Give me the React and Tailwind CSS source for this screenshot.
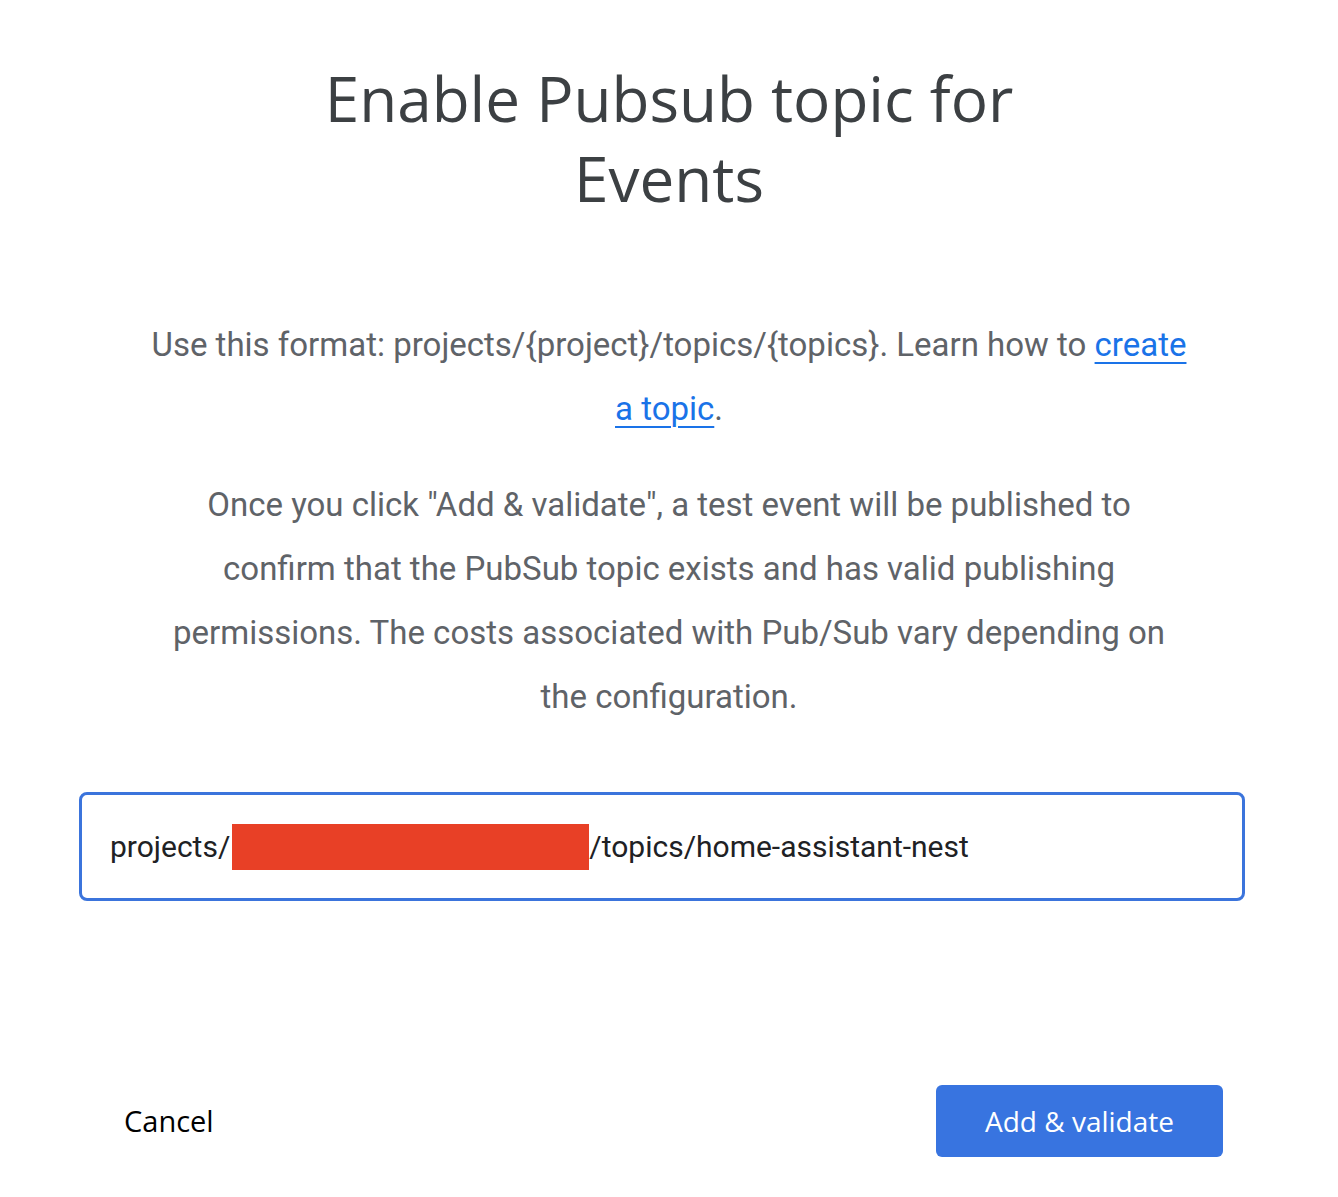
export default function App() {
  return (
    <div className="w-[1338px] h-[1197px] bg-white flex flex-col items-center">
      <h1 className="mt-[58px] text-[62px] leading-[80px] text-[#3c4043] text-center font-normal w-[760px] font-['Open_Sans',sans-serif]">
        Enable Pubsub topic for Events
      </h1>
      <div className="mt-[95px] w-[1040px] text-center text-[33px] leading-[64px] text-[#5f6368] font-['Roboto',sans-serif]">
        <p>
          Use this format: projects/{'{project}'}/topics/{'{topics}'}. Learn how to{' '}
          <a className="text-[#1a73e8] underline underline-offset-[6px] decoration-2">create a topic</a>.
        </p>
        <p className="mt-[32px]">
          Once you click "Add &amp; validate", a test event will be published to confirm that the PubSub topic exists and has valid publishing permissions. The costs associated with Pub/Sub vary depending on the configuration.
        </p>
      </div>
      <div className="mt-[63px] mr-[14px] w-[1166px] h-[109px] border-[3px] border-[#3b74dc] rounded-[8px] flex items-center px-[28px]">
        <span className="text-[30px] text-[#202124] flex items-center font-['Roboto',sans-serif]">
          projects/
          <span className="inline-block w-[357px] h-[46px] bg-[#e84026] ml-[2px]"></span>
          /topics/home-assistant-nest
        </span>
      </div>
      <div className="mt-[184px] w-[1338px] flex items-center justify-between pl-[124px] pr-[115px]">
        <button className="text-[29px] text-black font-['Open_Sans',sans-serif]">
          Cancel
        </button>
        <button className="w-[287px] h-[72px] bg-[#3874e0] rounded-[6px] text-white text-[28px] font-medium font-['Open_Sans',sans-serif]">
          Add &amp; validate
        </button>
      </div>
    </div>
  );
}
